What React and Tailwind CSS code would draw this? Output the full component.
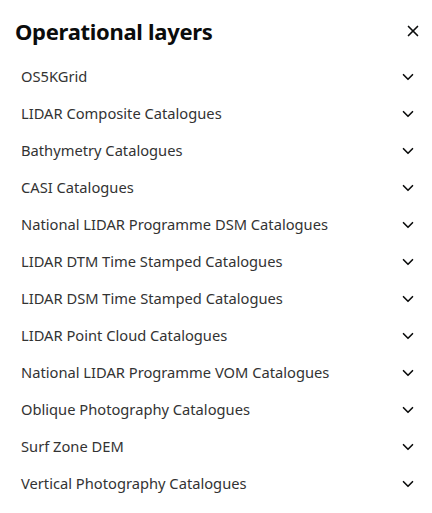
import { X, ChevronDown } from 'lucide-react';

const layers = [
  'OS5KGrid',
  'LIDAR Composite Catalogues',
  'Bathymetry Catalogues',
  'CASI Catalogues',
  'National LIDAR Programme DSM Catalogues',
  'LIDAR DTM Time Stamped Catalogues',
  'LIDAR DSM Time Stamped Catalogues',
  'LIDAR Point Cloud Catalogues',
  'National LIDAR Programme VOM Catalogues',
  'Oblique Photography Catalogues',
  'Surf Zone DEM',
  'Vertical Photography Catalogues',
];

export default function App() {
  return (
    <div className="w-[432px] h-[513px] bg-white font-['Noto_Sans',sans-serif] overflow-hidden">
      <div className="flex items-center justify-between pl-[15px] pr-[10px] pt-[14px] h-[48px]">
        <h2 className="text-[22px] font-bold text-[#0b0c0c] leading-none tracking-[-0.3px]">Operational layers</h2>
        <button className="w-[18px] h-[18px] flex items-center justify-center text-[#0b0c0c]">
          <X className="w-[18px] h-[18px]" strokeWidth={2.2} />
        </button>
      </div>
      <ul className="pt-[10px]">
        {layers.map((name) => (
          <li key={name} className="h-[37px] flex items-center justify-between pl-[21px] pr-[15px] text-[14.7px] text-[#333333]">
            <span>{name}</span>
            <ChevronDown className="w-[18px] h-[18px] text-[#0b0c0c]" strokeWidth={2.2} />
          </li>
        ))}
      </ul>
    </div>
  );
}
